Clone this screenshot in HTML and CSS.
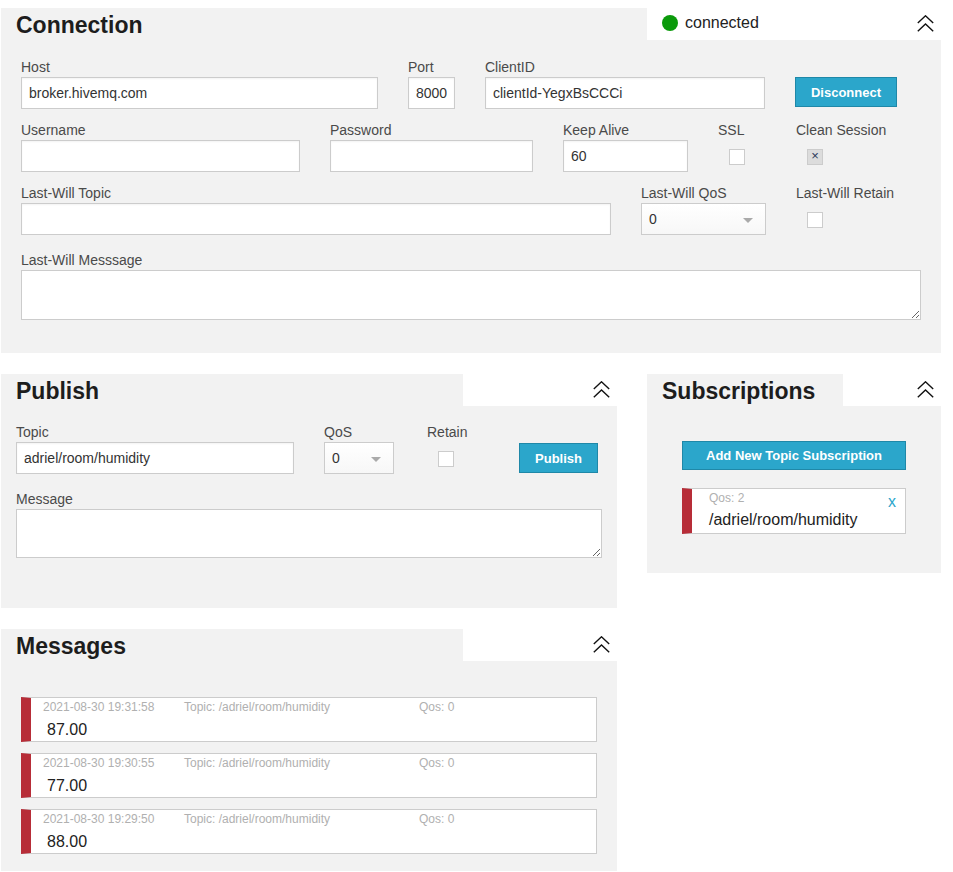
FILE: index.html
```html
<!DOCTYPE html>
<html>
<head>
<meta charset="utf-8">
<title>MQTT Websocket Client</title>
<link rel="stylesheet" href="styles.css">
</head>
<body>
<div class="page">
  <section class="panel panel-connection">
    <div class="panel-head">
      <div class="head-tab tab-connection"><h2 class="title">Connection</h2></div>
      <div class="head-rest">
        <div class="status"><span class="dot"></span><span class="status-text">connected</span></div>
        <svg class="chev" width="17" height="17" viewBox="0 0 17 17"><polyline points="0.8,8 8.5,0.8 16.2,8" fill="none" stroke="#111" stroke-width="1.4"/><polyline points="0.8,16.2 8.5,9 16.2,16.2" fill="none" stroke="#111" stroke-width="1.4"/></svg>
      </div>
    </div>
    <div class="panel-body body-connection">
      <div class="row">
        <div class="field w-host"><label class="lbl">Host</label><input class="inp" type="text" value="broker.hivemq.com"></div>
        <div class="field w-port"><label class="lbl">Port</label><input class="inp" type="text" value="8000"></div>
        <div class="field w-client"><label class="lbl">ClientID</label><input class="inp" type="text" value="clientId-YegxBsCCCi"></div>
        <div class="field"><button class="btn btn-disconnect">Disconnect</button></div>
      </div>
      <div class="row gap12">
        <div class="field w-user"><label class="lbl">Username</label><input class="inp" type="text" value=""></div>
        <div class="field w-pass"><label class="lbl">Password</label><input class="inp" type="password" value=""></div>
        <div class="field w-keep"><label class="lbl">Keep Alive</label><input class="inp" type="text" value="60"></div>
        <div class="field w-ssl"><label class="lbl">SSL</label><span class="check"></span></div>
        <div class="field"><label class="lbl">Clean Session</label><span class="check checked">×</span></div>
      </div>
      <div class="row gap12">
        <div class="field w-lwt"><label class="lbl">Last-Will Topic</label><input class="inp" type="text" value=""></div>
        <div class="field w-lwq"><label class="lbl">Last-Will QoS</label><div class="select"><span>0</span><span class="arrow"></span></div></div>
        <div class="field"><label class="lbl">Last-Will Retain</label><span class="check"></span></div>
      </div>
      <div class="row gap16">
        <div class="field"><label class="lbl">Last-Will Messsage</label><textarea class="txt w-lwm"></textarea></div>
      </div>
    </div>
  </section>

  <div class="lower">
    <div class="col-left">
      <section class="panel">
        <div class="panel-head">
          <div class="head-tab tab-narrow"><h2 class="title">Publish</h2></div>
          <div class="head-rest">
            <svg class="chev" width="17" height="17" viewBox="0 0 17 17"><polyline points="0.8,8 8.5,0.8 16.2,8" fill="none" stroke="#111" stroke-width="1.4"/><polyline points="0.8,16.2 8.5,9 16.2,16.2" fill="none" stroke="#111" stroke-width="1.4"/></svg>
          </div>
        </div>
        <div class="panel-body body-publish">
          <div class="row">
            <div class="field w-ptopic"><label class="lbl">Topic</label><input class="inp" type="text" value="adriel/room/humidity"></div>
            <div class="field w-pqos"><label class="lbl">QoS</label><div class="select"><span>0</span><span class="arrow"></span></div></div>
            <div class="field w-pret"><label class="lbl">Retain</label><span class="check"></span></div>
            <div class="field"><button class="btn btn-publish">Publish</button></div>
          </div>
          <div class="row gap16">
            <div class="field"><label class="lbl">Message</label><textarea class="txt w-pmsg"></textarea></div>
          </div>
        </div>
      </section>

      <section class="panel">
        <div class="panel-head">
          <div class="head-tab tab-narrow"><h2 class="title">Messages</h2></div>
          <div class="head-rest">
            <svg class="chev" width="17" height="17" viewBox="0 0 17 17"><polyline points="0.8,8 8.5,0.8 16.2,8" fill="none" stroke="#111" stroke-width="1.4"/><polyline points="0.8,16.2 8.5,9 16.2,16.2" fill="none" stroke="#111" stroke-width="1.4"/></svg>
          </div>
        </div>
        <div class="panel-body body-messages">
          <div class="msg">
            <div class="msg-meta"><span class="m-ts">2021-08-30 19:31:58</span><span class="m-topic">Topic: /adriel/room/humidity</span><span>Qos: 0</span></div>
            <div class="msg-val">87.00</div>
          </div>
          <div class="msg">
            <div class="msg-meta"><span class="m-ts">2021-08-30 19:30:55</span><span class="m-topic">Topic: /adriel/room/humidity</span><span>Qos: 0</span></div>
            <div class="msg-val">77.00</div>
          </div>
          <div class="msg">
            <div class="msg-meta"><span class="m-ts">2021-08-30 19:29:50</span><span class="m-topic">Topic: /adriel/room/humidity</span><span>Qos: 0</span></div>
            <div class="msg-val">88.00</div>
          </div>
        </div>
      </section>
    </div>

    <div class="col-right">
      <section class="panel">
        <div class="panel-head">
          <div class="head-tab tab-subs"><h2 class="title">Subscriptions</h2></div>
          <div class="head-rest">
            <svg class="chev" width="17" height="17" viewBox="0 0 17 17"><polyline points="0.8,8 8.5,0.8 16.2,8" fill="none" stroke="#111" stroke-width="1.4"/><polyline points="0.8,16.2 8.5,9 16.2,16.2" fill="none" stroke="#111" stroke-width="1.4"/></svg>
          </div>
        </div>
        <div class="panel-body body-subs">
          <button class="btn btn-add">Add New Topic Subscription</button>
          <div class="sub">
            <div class="sub-qos">Qos: 2</div>
            <div class="sub-topic">/adriel/room/humidity</div>
            <span class="sub-x">x</span>
          </div>
        </div>
      </section>
    </div>
  </div>
</div>
</body>
</html>
```

FILE: styles.css
```css
* { box-sizing: border-box; }
html, body { margin: 0; padding: 0; background: #fff; }
body {
  font-family: "Liberation Sans", Arial, Helvetica, sans-serif;
  color: #333;
  font-size: 14px;
}
.page {
  width: 940px;
  margin: 8px 0 0 1px;
}
.panel { background: transparent; }
.panel-head {
  display: flex;
  height: 32px;
}
.head-tab {
  background: #f2f2f2;
  padding-left: 15px;
}
.tab-connection { width: 646px; }
.tab-narrow { width: 462px; }
.tab-subs { width: 196px; }
.head-rest {
  flex: 1;
  display: flex;
  align-items: flex-start;
  justify-content: space-between;
  padding-right: 7px;
  background: #fff;
}
.head-rest .chev { margin-left: auto; margin-top: 7px; display: block; }
.title {
  margin: 0;
  font-size: 23px;
  font-weight: bold;
  line-height: 32px;
  padding-top: 1px;
  color: #1d1d1d;
}
.status {
  display: flex;
  align-items: center;
  height: 28px;
  padding-top: 1px;
  padding-left: 15px;
}
.dot {
  width: 16px;
  height: 16px;
  border-radius: 50%;
  background: #0b9a0b;
  margin-right: 7px;
}
.status-text { font-size: 16px; color: #222; line-height: 28px; }

.panel-body { background: #f2f2f2; }
.body-connection { padding: 18px 20px 33px; }
.body-publish { padding: 17px 15px 50px; }
.body-messages { padding: 36px 20px 17px; display: flex; flex-direction: column; gap: 11px; }
.body-subs { padding: 35px 35px 39px; }

.row { display: flex; gap: 30px; }
.gap12 { margin-top: 12px; }
.gap16 { margin-top: 16px; }
.field { display: flex; flex-direction: column; }
.lbl {
  display: block;
  font-size: 14px;
  line-height: 16px;
  height: 17px;
  padding-top: 1px;
  margin-bottom: 2px;
  color: #4a4a4a;
  white-space: nowrap;
}
.inp {
  height: 32px;
  border: 1px solid #ccc;
  background: #fff;
  font-family: "Liberation Sans", Arial, sans-serif;
  font-size: 14px;
  color: #333;
  padding: 0 7px;
  margin: 0;
  outline: none;
  box-shadow: inset 0 1px 2px rgba(0,0,0,0.05);
}
.w-host { width: 357px; }
.w-port { width: 47px; }
.w-client { width: 280px; }
.w-user { width: 279px; }
.w-pass { width: 203px; }
.w-keep { width: 125px; }
.w-ssl { width: 48px; }
.w-lwt { width: 590px; }
.w-lwq { width: 125px; }
.w-lwm { width: 900px; height: 50px; }
.w-ptopic { width: 278px; }
.w-pqos { width: 70px; margin-right: 3px; }
.w-pret { width: 62px; }
.w-pmsg { width: 586px; height: 49px; }

.txt {
  display: block;
  border: 1px solid #ccc;
  background: #fff;
  margin: 0;
  padding: 6px;
  font-family: "Liberation Sans", Arial, sans-serif;
  font-size: 14px;
  outline: none;
}
.check {
  display: block;
  width: 16px;
  height: 16px;
  margin: 9px 0 0 11px;
  border: 1px solid #ccc;
  background: #fff;
}
.check.checked {
  background: #dcdcdc;
  color: #2a3a5a;
  font-size: 13px;
  line-height: 12px;
  text-align: center;
}
.select {
  height: 32px;
  border: 1px solid #ccc;
  background: linear-gradient(#fff, #f7f7f7);
  display: flex;
  align-items: center;
  justify-content: space-between;
  padding: 0 12px 0 7px;
  font-size: 14px;
  color: #333;
}
.arrow {
  width: 0;
  height: 0;
  border-left: 5px solid transparent;
  border-right: 5px solid transparent;
  border-top: 5px solid #aaa;
  margin-top: 2px;
}
.btn {
  font-family: "Liberation Sans", Arial, sans-serif;
  font-weight: bold;
  font-size: 13px;
  color: #fff;
  background: #2ba6cb;
  border: 1px solid #1f88a8;
  padding: 0;
  cursor: pointer;
}
.btn-disconnect { width: 102px; height: 30px; margin-top: 19px; }
.btn-publish { width: 79px; height: 30px; margin-top: 20px; }
.btn-add { display: block; width: 224px; height: 29px; }

.sub {
  position: relative;
  margin-top: 18px;
  width: 224px;
  height: 46px;
  background: #fff;
  border: 1px solid #ccc;
  border-left: 10px solid #b72d38;
  padding: 2px 0 0 17px;
}
.sub-qos { font-size: 12px; line-height: 14px; color: #b0b0b0; }
.sub-topic { font-size: 16px; line-height: 20px; margin-top: 5px; color: #222; }
.sub-x {
  position: absolute;
  right: 9px;
  top: 3px;
  font-size: 16px;
  line-height: 20px;
  color: #2ba6cb;
}

.msg {
  width: 576px;
  height: 45px;
  background: #fff;
  border: 1px solid #ccc;
  border-left: 10px solid #b72d38;
  padding: 2px 0 0 12px;
}
.msg-meta { display: flex; font-size: 12px; line-height: 14px; color: #b0b0b0; white-space: nowrap; }
.m-ts { width: 141px; }
.m-topic { width: 235px; }
.msg-val { font-size: 16px; line-height: 20px; margin-top: 6px; padding-left: 4px; color: #222; }

.lower {
  display: grid;
  grid-template-columns: 616px 294px;
  column-gap: 30px;
  margin-top: 21px;
  align-items: start;
}
.col-left { display: flex; flex-direction: column; gap: 21px; }
```
